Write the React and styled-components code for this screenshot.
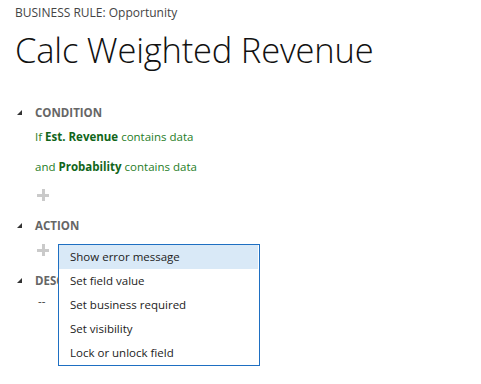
import styled, { createGlobalStyle } from "styled-components"

const GlobalStyle = createGlobalStyle`
  body {
    margin: 0;
    background: #fff;
    font-family: "Open Sans", "Noto Sans", sans-serif;
  }
`

const Page = styled.div`
  width: 481px;
  height: 384px;
  overflow: hidden;
  padding: 0 0 0 15px;
  box-sizing: border-box;
`

const Crumb = styled.div`
  font-size: 12px;
  line-height: 16px;
  color: #444;
  padding-top: 5px;
`

const Title = styled.h1`
  margin: 9px 0 0 0;
  font-size: 34.5px;
  font-weight: 300;
  line-height: 40px;
  color: #111;
  letter-spacing: -0.2px;
`

const Section = styled.div`
  margin-top: ${p => p.$top}px;
`

const Header = styled.div`
  display: flex;
  align-items: center;
  height: 16px;
  font-size: 11.5px;
  font-weight: 700;
  color: #666;
`

const Arrow = styled.span`
  width: 0;
  height: 0;
  border-left: 5px solid transparent;
  border-bottom: 5px solid #333;
  margin: 0 13px 0 2px;
`

const Line = styled.div`
  padding-left: 20px;
  font-size: 11.5px;
  line-height: 16px;
  color: #1f7d1f;
  margin-top: ${p => p.$top}px;
  b {
    color: #11651a;
    font-weight: 700;
  }
`

const AddRow = styled.div`
  position: relative;
  margin: ${p => p.$top}px 0 0 22px;
  height: 12px;
`

const Plus = styled.span`
  display: block;
  width: 12px;
  height: 12px;
  position: relative;
  &::before,
  &::after {
    content: "";
    position: absolute;
    background: #cacaca;
  }
  &::before {
    left: 0;
    top: 5px;
    width: 12px;
    height: 3px;
  }
  &::after {
    left: 5px;
    top: 0;
    width: 3px;
    height: 12px;
  }
`

const Menu = styled.ul`
  position: absolute;
  left: 21px;
  top: 0;
  width: 200px;
  margin: 0;
  padding: 0;
  list-style: none;
  background: #fff;
  border: 1px solid #1e6fc2;
  z-index: 2;
`

const Item = styled.li`
  height: 24px;
  line-height: 24px;
  padding-left: 11px;
  margin-right: 1px;
  font-size: 11.5px;
  color: #222;
  background: ${p => (p.$active ? "#d9e9f7" : "transparent")};
`

const Dash = styled.div`
  padding-left: 23px;
  margin-top: 5px;
  font-size: 11.5px;
  color: #333;
`

const actions = [
  "Show error message",
  "Set field value",
  "Set business required",
  "Set visibility",
  "Lock or unlock field",
]

export default function App() {
  return (
    <Page>
      <GlobalStyle />
      <Crumb>BUSINESS RULE: Opportunity</Crumb>
      <Title>Calc Weighted Revenue</Title>

      <Section $top={34}>
        <Header>
          <Arrow />
          CONDITION
        </Header>
        <Line $top={9}>
          If <b>Est. Revenue</b> contains data
        </Line>
        <Line $top={14}>
          and <b>Probability</b> contains data
        </Line>
        <AddRow $top={14}>
          <Plus />
        </AddRow>
      </Section>

      <Section $top={16}>
        <Header>
          <Arrow />
          ACTION
        </Header>
        <AddRow $top={11}>
          <Plus />
          <Menu>
            {actions.map((a, i) => (
              <Item key={a} $active={i === 0}>
                {a}
              </Item>
            ))}
          </Menu>
        </AddRow>
      </Section>

      <Section $top={16}>
        <Header>
          <Arrow />
          DESCRIPTION
        </Header>
        <Dash>--</Dash>
      </Section>
    </Page>
  )
}
